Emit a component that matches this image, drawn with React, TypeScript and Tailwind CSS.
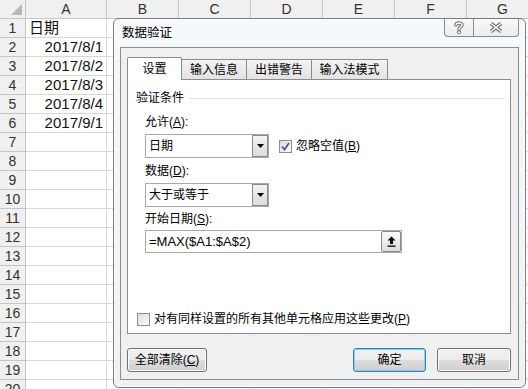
import React from "react";

const COLS = [
  { l: "A", cls: "w-[81px]" },
  { l: "B", cls: "w-[72px]" },
  { l: "C", cls: "w-[72px]" },
  { l: "D", cls: "w-[72px]" },
  { l: "E", cls: "w-[72px]" },
  { l: "F", cls: "w-[72px]" },
  { l: "G", cls: "w-[72px]" },
];

const DATA: Record<number, { t: string; r?: boolean }> = {
  1: { t: "日期" },
  2: { t: "2017/8/1", r: true },
  3: { t: "2017/8/2", r: true },
  4: { t: "2017/8/3", r: true },
  5: { t: "2017/8/4", r: true },
  6: { t: "2017/9/1", r: true },
};

const ROWS = Array.from({ length: 20 }, (_, i) => i + 1);

function Sheet() {
  return (
    <div className="flex flex-col font-['Liberation_Sans','Noto_Sans_CJK_SC',sans-serif] text-[#222]">
      <div className="flex h-[19px] shrink-0">
        <div className="relative w-[26px] shrink-0 h-full bg-[#f0f0f0] border-r border-b border-[#c6c6c6]">
          <svg className="absolute right-[3px] bottom-[3px]" width="11" height="11" viewBox="0 0 11 11">
            <polygon points="11,0 11,11 0,11" fill="#b8b8b8" />
          </svg>
        </div>
        {COLS.map((c) => (
          <div
            key={c.l}
            className={`${c.cls} shrink-0 h-full bg-[#f0f0f0] border-r border-b border-[#c6c6c6] flex items-center justify-center text-[14px] text-[#333]`}
          >
            {c.l}
          </div>
        ))}
      </div>
      {ROWS.map((r) => (
        <div key={r} className="flex h-[19px] shrink-0">
          <div className="w-[26px] shrink-0 h-full bg-[#f0f0f0] border-r border-b border-[#c6c6c6] flex items-center justify-center text-[14px] text-[#333]">
            {r}
          </div>
          {COLS.map((c, i) => {
            const d = i === 0 ? DATA[r] : undefined;
            return (
              <div
                key={c.l}
                className={`${c.cls} shrink-0 h-full bg-white border-r border-b border-[#d8d8d8] flex items-center text-[15px] text-[#111] px-[3px] ${
                  d && d.r ? "justify-end" : "justify-start"
                }`}
              >
                {d ? d.t : null}
              </div>
            );
          })}
        </div>
      ))}
    </div>
  );
}

function DropArrow() {
  return (
    <svg width="7" height="4" viewBox="0 0 7 4">
      <polygon points="0,0 7,0 3.5,4" fill="#000" />
    </svg>
  );
}

function Combo({ text }: { text: string }) {
  return (
    <div className="w-[124px] h-[24px] border border-[#a9a9a9] bg-white flex items-stretch">
      <div className="flex-1 flex items-center pl-[3px] text-[12px] text-black">{text}</div>
      <div className="w-[16px] border border-[#8a8a8a] bg-[linear-gradient(#f4f4f4,#dcdcdc)] flex items-center justify-center">
        <DropArrow />
      </div>
    </div>
  );
}

function CheckBox({ checked }: { checked?: boolean }) {
  return (
    <div className="w-[13px] h-[13px] border border-[#8e8f8f] bg-[linear-gradient(135deg,#dcdcdc,#fbfbfb)] flex items-center justify-center shrink-0">
      {checked ? (
        <svg width="9" height="9" viewBox="0 0 9 9">
          <path d="M1 4.5 L3.5 7.5 L8 1" stroke="#4a5f8c" strokeWidth="1.8" fill="none" />
        </svg>
      ) : null}
    </div>
  );
}

function WinButton({ children, def, cls }: { children: React.ReactNode; def?: boolean; cls: string }) {
  return (
    <div
      className={`${cls} h-[24px] rounded-[3px] border flex items-center justify-center text-[12px] text-black bg-[linear-gradient(#f2f2f2_0%,#ebebeb_50%,#dddddd_51%,#cfcfcf_100%)] ${
        def
          ? "border-[#3c7fb1] shadow-[inset_0_0_0_1px_#7fd0f5]"
          : "border-[#707070] shadow-[inset_0_0_0_1px_#fcfcfc]"
      }`}
    >
      {children}
    </div>
  );
}

function Dialog() {
  return (
    <div className="absolute left-[113px] top-[18px] w-[413px] h-[370px] rounded-[6px] border border-[#7b7b7b] bg-[linear-gradient(#f6f9fb,#eef2f5)] flex flex-col font-['Liberation_Sans','Noto_Sans_CJK_SC',sans-serif] text-black shadow-[inset_0_0_0_1px_#ffffff]">
      <div className="h-[28px] flex items-start shrink-0">
        <div className="pl-[8px] pt-[6px] text-[12.5px] leading-[16px] text-black">数据验证</div>
        <div className="ml-auto mr-[6px] flex">
          <div className="w-[29px] h-[18px] border-l border-b border-[#8c8c8c] rounded-bl-[4px] flex items-center justify-center bg-[linear-gradient(#f7f9fa,#e9edf0)]">
            <svg width="10" height="13" viewBox="0 0 10 13">
              <path d="M2 4 C2 1.5 8 1.2 8 4 C8 6 5 6 5 8.5" stroke="#6a6a6a" strokeWidth="3.4" fill="none" strokeLinecap="round" />
              <path d="M2 4 C2 1.5 8 1.2 8 4 C8 6 5 6 5 8.5" stroke="#ffffff" strokeWidth="1.4" fill="none" strokeLinecap="round" />
              <circle cx="5" cy="11.3" r="1.6" fill="#ffffff" stroke="#6a6a6a" strokeWidth="1" />
            </svg>
          </div>
          <div className="w-[46px] h-[18px] border-l border-r border-b border-[#8c8c8c] rounded-br-[4px] flex items-center justify-center bg-[linear-gradient(#f7f9fa,#e9edf0)]">
            <svg width="14" height="11" viewBox="0 0 14 11">
              <path d="M2 1.5 L12 9.5 M12 1.5 L2 9.5" stroke="#6a6a6a" strokeWidth="3.6" fill="none" />
              <path d="M2 1.5 L12 9.5 M12 1.5 L2 9.5" stroke="#ffffff" strokeWidth="1.5" fill="none" />
            </svg>
          </div>
        </div>
      </div>
      <div className="mx-[6px] h-[333px] border border-[#8c8c8c] bg-[#f0f0f0] flex flex-col pl-[6px] pr-[7px] pt-[8px]">
        <div className="flex items-end h-[23px] relative z-10">
          <div className="w-[55px] h-[23px] -mb-[1px] border-l border-t border-r border-[#898c95] bg-white flex items-center justify-center text-[12px] rounded-t-[2px]">
            设置
          </div>
          <div className="w-[66px] -ml-[1px] h-[20px] border-l border-t border-r border-[#898c95] bg-[linear-gradient(#f3f3f3,#e3e3e3)] flex items-center justify-center text-[12px]">
            输入信息
          </div>
          <div className="w-[66px] -ml-[1px] h-[20px] border-l border-t border-r border-[#898c95] bg-[linear-gradient(#f3f3f3,#e3e3e3)] flex items-center justify-center text-[12px]">
            出错警告
          </div>
          <div className="w-[77px] -ml-[1px] h-[20px] border-l border-t border-r border-[#898c95] bg-[linear-gradient(#f3f3f3,#e3e3e3)] flex items-center justify-center text-[12px]">
            输入法模式
          </div>
        </div>
        <div className="w-[384px] h-[255px] border border-[#898c95] bg-white flex flex-col text-[12px]">
          <div className="mt-[10px] h-[16px] flex items-center pl-[8px] pr-[5px]">
            <span className="leading-[16px]">验证条件</span>
            <div className="flex-1 ml-[6px] h-px bg-[#d5dfe5]" />
          </div>
          <div className="mt-[8px] h-[16px] leading-[16px] pl-[17px]">
            允许(<span className="underline">A</span>):
          </div>
          <div className="mt-[4px] pl-[17px] flex items-center">
            <Combo text="日期" />
            <div className="ml-[10px] flex items-center">
              <CheckBox checked />
              <span className="ml-[4px] leading-[16px]">
                忽略空值(<span className="underline">B</span>)
              </span>
            </div>
          </div>
          <div className="mt-[5px] h-[16px] leading-[16px] pl-[17px]">
            数据(<span className="underline">D</span>):
          </div>
          <div className="mt-[4px] pl-[17px] flex">
            <Combo text="大于或等于" />
          </div>
          <div className="mt-[4px] h-[16px] leading-[16px] pl-[17px]">
            开始日期(<span className="underline">S</span>):
          </div>
          <div className="mt-[3px] pl-[17px] flex">
            <div className="w-[257px] h-[23px] border border-[#a9a9a9] bg-white flex items-center">
              <div className="flex-1 pl-[3px] text-[13px] font-['Liberation_Sans',sans-serif]">=MAX($A1:$A$2)</div>
              <div className="w-[20px] h-[21px] border border-[#8a8a8a] rounded-[2px] bg-[linear-gradient(#fafafa,#dedede)] flex items-center justify-center">
                <svg width="9" height="11" viewBox="0 0 9 11">
                  <polygon points="4.5,0.5 8.5,4.5 6,4.5 6,8 3,8 3,4.5 0.5,4.5" fill="#000" />
                  <rect x="0.5" y="9.5" width="8" height="1.3" fill="#000" />
                </svg>
              </div>
            </div>
          </div>
          <div className="mt-auto mb-[6px] h-[16px] pl-[9px] flex items-center">
            <CheckBox />
            <span className="ml-[4px] leading-[16px]">
              对有同样设置的所有其他单元格应用这些更改(<span className="underline">P</span>)
            </span>
          </div>
        </div>
        <div className="mt-[14px] flex">
          <WinButton cls="w-[80px]">
            <span>
              全部清除(<span className="underline">C</span>)
            </span>
          </WinButton>
          <div className="ml-auto flex gap-[11px]">
            <WinButton cls="w-[73px]" def>
              确定
            </WinButton>
            <WinButton cls="w-[74px]">取消</WinButton>
          </div>
        </div>
      </div>
    </div>
  );
}

export default function App() {
  return (
    <div className="relative w-[528px] h-[389px] overflow-hidden bg-white">
      <Sheet />
      <Dialog />
    </div>
  );
}
